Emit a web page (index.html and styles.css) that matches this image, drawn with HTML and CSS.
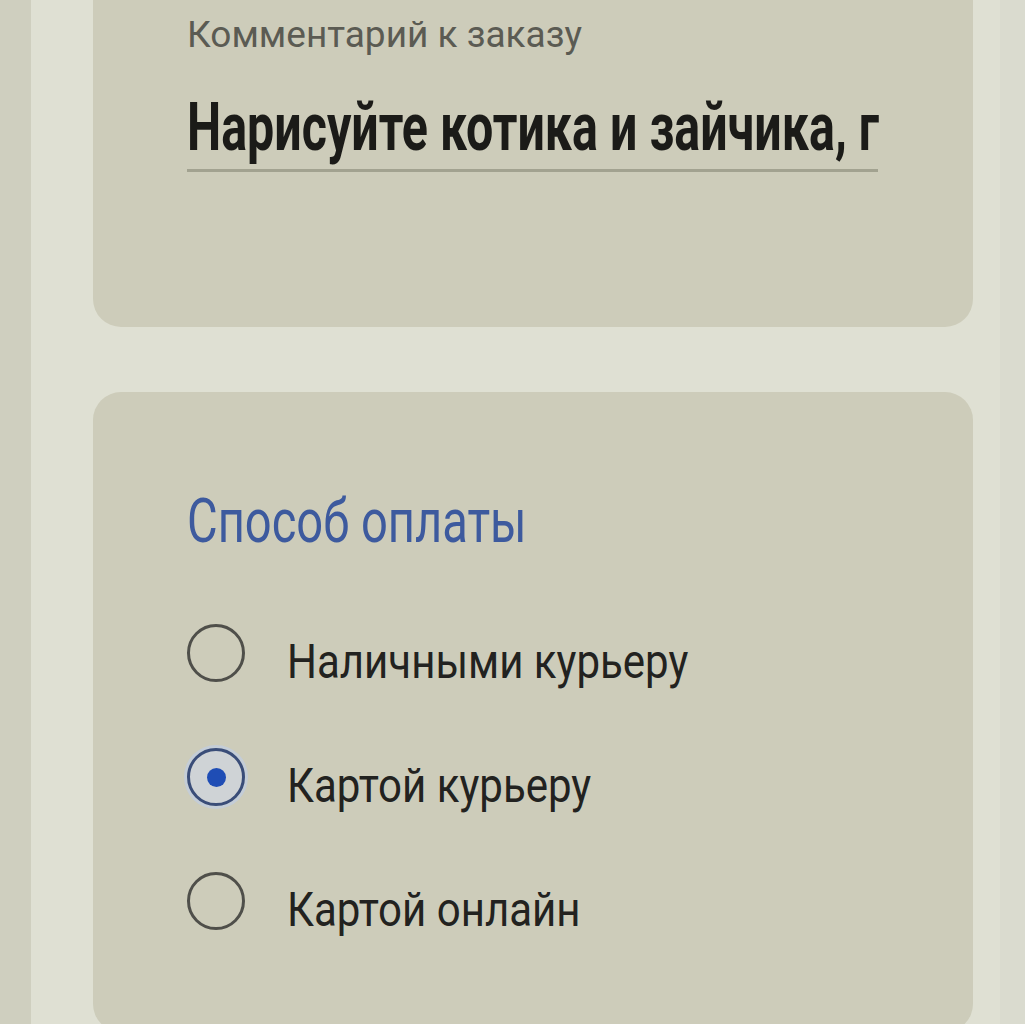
FILE: index.html
```html
<!DOCTYPE html>
<html lang="ru">
<head>
    <meta charset="UTF-8">
    <title>Оформление заказа</title>
    <link rel="stylesheet" href="styles.css">
</head>
<body>
    <div class="edge-left"></div>

    <main class="checkout">
        <section class="card card-comment">
            <label class="field-label" for="comment">Комментарий к заказу</label>
            <div class="field-value" id="comment"><span class="narrow">Нарисуйте котика и зайчика, г</span></div>
        </section>

        <section class="card card-payment">
            <h2 class="section-title"><span class="narrow">Способ оплаты</span></h2>

            <ul class="radio-list">
                <li class="radio-row">
                    <span class="radio"></span>
                    <span class="radio-text narrow">Наличными курьеру</span>
                </li>
                <li class="radio-row">
                    <span class="radio checked"><span class="dot"></span></span>
                    <span class="radio-text narrow">Картой курьеру</span>
                </li>
                <li class="radio-row">
                    <span class="radio"></span>
                    <span class="radio-text narrow">Картой онлайн</span>
                </li>
            </ul>
        </section>
    </main>

    <div class="edge-right"></div>
</body>
</html>
```

FILE: styles.css
```css
html, body {
    height: 100%;
}

body {
    margin: 0;
    display: flex;
    overflow: hidden;
    background-color: #dfe0d3;
    font-family: Roboto, "Noto Sans", Arial, sans-serif;
}

.edge-left {
    width: 31px;
    flex-shrink: 0;
    background-color: #cfcfbf;
}

.edge-right {
    width: 25px;
    flex-shrink: 0;
    background-color: #dadbcf;
}

.checkout {
    flex: 1;
    min-width: 0;
    padding: 0 27px 0 62px;
    display: flex;
    flex-direction: column;
    gap: 65px;
}

.card {
    flex-shrink: 0;
    background-color: #cdccba;
    padding: 0 95px 0 94px;
}

.card-comment {
    height: 327px;
    border-radius: 0 0 28px 28px;
    box-sizing: border-box;
    padding-top: 13px;
}

.card-payment {
    height: 640px;
    border-radius: 28px;
    box-sizing: border-box;
    padding-top: 93px;
}

/* Condensed look: smaller Roboto stretched vertically, so the
   layout width stays the same as the drawn width */
.narrow {
    display: inline-block;
    transform-origin: left center;
    white-space: nowrap;
}

.field-label {
    display: block;
    color: #5b5b53;
    font-size: 37px;
    line-height: 44px;
    white-space: nowrap;
}

.field-value {
    margin-top: 35px;
    color: #1b1b18;
    font-size: 48.4px;
    font-weight: 700;
    line-height: 72px;
    padding-bottom: 5px;
    border-bottom: 3px solid #a2a290;
}

.field-value .narrow {
    transform: scaleY(1.364);
}

.section-title {
    margin: 0;
    color: #3d5a9e;
    font-size: 47.1px;
    font-weight: 400;
    line-height: 72px;
}

.section-title .narrow {
    transform: scaleY(1.316);
}

.radio-list {
    list-style: none;
    margin: 67px 0 0;
    padding: 0;
    display: flex;
    flex-direction: column;
    gap: 49px;
}

.radio-row {
    display: flex;
    align-items: flex-start;
    gap: 42px;
}

.radio {
    width: 58px;
    height: 58px;
    box-sizing: border-box;
    flex-shrink: 0;
    border: 3px solid #4f4f4a;
    border-radius: 50%;
    display: flex;
    align-items: center;
    justify-content: center;
}

.radio.checked {
    border-color: #3a4d78;
    box-shadow: 0 0 0 3px rgba(190, 205, 235, 0.6);
    background-color: #cfd3d6;
}

.dot {
    width: 19px;
    height: 19px;
    border-radius: 50%;
    background-color: #1f4db5;
}

.radio-text {
    color: #222220;
    font-size: 42px;
    line-height: 75px;
    transform: scaleY(1.1655);
}
```
